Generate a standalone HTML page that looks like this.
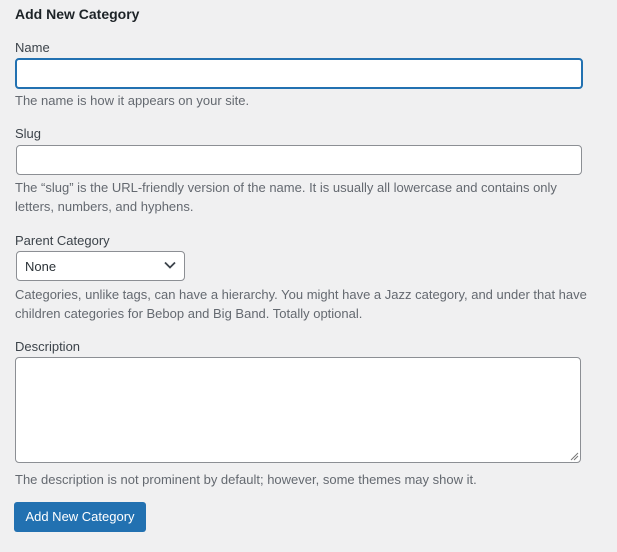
<!DOCTYPE html>
<html><head><style>
body{margin:0;width:617px;height:552px;background:#f0f0f1;font-family:"Liberation Sans",sans-serif;font-size:13px;color:#3c434a;position:relative;overflow:hidden}
.a{position:absolute;white-space:nowrap}
.h{color:#646970;font-size:13px;line-height:19px}
.box{position:absolute;background:#fff;border:1px solid #8c8f94;border-radius:4px;box-sizing:border-box}
</style></head><body>
<div class="a" style="left:15px;top:5px;font-size:14px;font-weight:bold;color:#1d2327;line-height:18px">Add New Category</div>
<div class="a" style="left:15px;top:40px;line-height:16px">Name</div>
<div class="box" style="left:15px;top:58px;width:568px;height:31px;border:2px solid #2271b1"></div>
<div class="a h" style="left:15px;top:91px">The name is how it appears on your site.</div>
<div class="a" style="left:15px;top:126px;line-height:16px">Slug</div>
<div class="box" style="left:16px;top:145px;width:566px;height:30px"></div>
<div class="a h" style="left:15px;top:178px">The “slug” is the URL-friendly version of the name. It is usually all lowercase and contains only<br>letters, numbers, and hyphens.</div>
<div class="a" style="left:15px;top:233px;line-height:16px">Parent Category</div>
<div class="box" style="left:16px;top:251px;width:169px;height:30px"></div>
<div class="a" style="left:25px;top:259px;font-size:13px;color:#2c3338">None</div>
<svg class="a" style="left:163px;top:260px" width="14" height="10" viewBox="0 0 14 10"><path d="M2 2.5 L7 7.5 L12 2.5" fill="none" stroke="#3c434a" stroke-width="1.8"/></svg>
<div class="a h" style="left:15px;top:285px">Categories, unlike tags, can have a hierarchy. You might have a Jazz category, and under that have<br>children categories for Bebop and Big Band. Totally optional.</div>
<div class="a" style="left:15px;top:339px;line-height:16px">Description</div>
<div class="box" style="left:15px;top:357px;width:566px;height:106px"></div>
<svg class="a" style="left:570px;top:452px" width="9" height="9"><path d="M1 8 L8 1 M4 8 L8 4" stroke="#777" stroke-width="1"/></svg>
<div class="a h" style="left:15px;top:470px">The description is not prominent by default; however, some themes may show it.</div>
<div class="a" style="left:14px;top:502px;width:132px;height:30px;background:#2271b1;border-radius:3px;color:#fff;text-align:center;line-height:30px;font-size:13px">Add New Category</div>
</body></html>
